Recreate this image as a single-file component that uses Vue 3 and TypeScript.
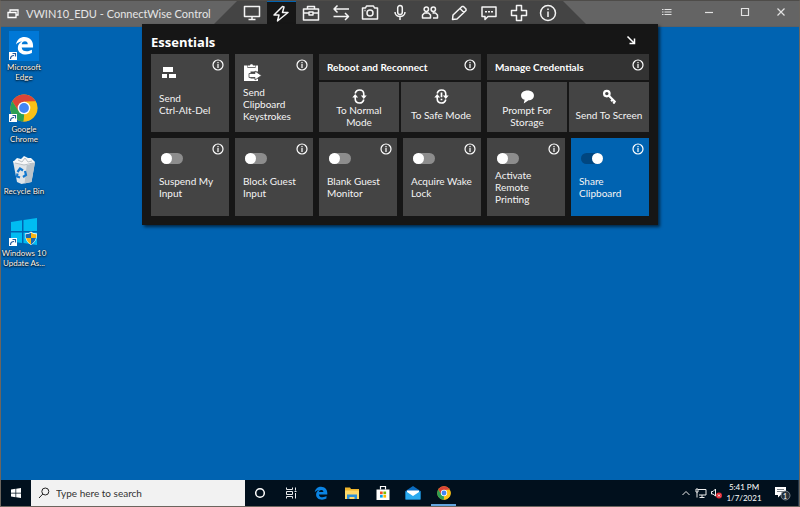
<script setup lang="ts">
import { ref } from 'vue'

interface Tool { name: string; path: string }
interface Tile { title: string; on: boolean }
interface Command { title: string; icon: string }
interface Group { title: string; commands: Command[] }

const tools: Tool[] = [
  { name: 'General', path: 'M1.5 2.5h15v10h-15zM9 12.500v2.500M5.500 15.500h7' },
  { name: 'Essentials', path: 'M10.500 1.500L2 10h5l-1.500 6L16 7.500h-5.500L12 2z' },
  { name: 'Toolbox', path: 'M1.500 5h15v11h-15zM5.500 5V2.500h7V5M1.500 9h5.500M11 9h5.500M7 8h4v3H7z' },
  { name: 'Transfer', path: 'M17 5H2M5.500 1.500L2 5l3.500 3.500M1.500 12.500h15M13 9l3.500 3.500L13 16' },
  { name: 'Screenshot', path: 'M1.500 4h3l1-2h7l1 2h3v11h-15zM12 9a3 3 0 1 1-6 0a3 3 0 0 1 6 0zM3.500 6.500h1' },
  { name: 'Audio', path: 'M9 1.500a2.300 2.300 0 0 1 2.300 2.300v4.500a2.300 2.300 0 0 1-4.600 0V3.800A2.300 2.300 0 0 1 9 1.500zM4 8c0 6 10 6 10 0M9 12.500V16' },
  { name: 'Participants', path: 'M7.500 5.200a2.200 2.200 0 1 1-4.400 0a2.200 2.200 0 0 1 4.400 0zM14.500 5.200a2.200 2.200 0 1 1-4.400 0a2.200 2.200 0 0 1 4.400 0zM1.500 14v-3l2-2h4l2 2v3zM12 14h4.500v-3l-2-2h-3' },
  { name: 'Annotate', path: 'M2.500 15.500l.5-4.500L12 2.500l1.500 0 2.500 2.500v1.500L7 15zM10 4.500l4 4' },
  { name: 'Messages', path: 'M2 3h14v9.500H8L5 15.500v-3H2zM5 7.700h2M8 7.700h2M11 7.700h2' },
  { name: 'Helper', path: 'M6.500 1.500h5v5h5v5h-5v5h-5v-5h-5v-5h5z' },
  { name: 'Information', path: 'M16.500 9a7.500 7.500 0 1 1-15 0a7.500 7.500 0 0 1 15 0zM9 7.500V13M9 4.500v1.500' },
]

const active = ref('Essentials')
const search = ref('')

const sends: Command[] = [
  { title: 'Send\nCtrl-Alt-Del', icon: 'keys' },
  { title: 'Send\nClipboard\nKeystrokes', icon: 'clipboard' },
]

const groups: Group[] = [
  { title: 'Reboot and Reconnect', commands: [{ title: 'To Normal\nMode', icon: 'cycle' }, { title: 'To Safe Mode', icon: 'safe' }] },
  { title: 'Manage Credentials', commands: [{ title: 'Prompt For\nStorage', icon: 'bubble' }, { title: 'Send To Screen', icon: 'key' }] },
]

const toggles = ref<Tile[]>([
  { title: 'Suspend My\nInput', on: false },
  { title: 'Block Guest\nInput', on: false },
  { title: 'Blank Guest\nMonitor', on: false },
  { title: 'Acquire Wake\nLock', on: false },
  { title: 'Activate\nRemote\nPrinting', on: false },
  { title: 'Share\nClipboard', on: true },
])
</script>

<template>
  <div class="window">
    <svg class="defs" aria-hidden="true">
      <symbol id="info" viewBox="0 0 12 12"><circle cx="6" cy="6" r="5" fill="none" stroke="currentColor" stroke-width="1.200" /><path d="M6 5v4M6 3v1.200" stroke="currentColor" stroke-width="1.200" /></symbol>
      <symbol id="chrome" viewBox="0 0 28 28">
        <circle cx="14" cy="14" r="13.500" fill="#fbc116" />
        <path d="M2.300 7.200A13.500 13.500 0 0 1 25.700 7.200L14 7.800l-5.500 9.200z" fill="#db4437" />
        <path d="M2.300 7.200l6.300 10 5.600 3L13.500 27.500A13.500 13.500 0 0 1 2.300 7.200z" fill="#2b9f54" />
        <path d="M14 7.800h11.700A13.500 13.500 0 0 1 13.200 27.500L20 17z" fill="#fbc116" />
        <circle cx="14" cy="14" r="6.300" fill="#fff" /><circle cx="14" cy="14" r="4.900" fill="#4285f4" />
      </symbol>
      <symbol id="edge" viewBox="0 0 20 20"><path d="M1 9C2 3.500 5.700 1 10 1c5.500 0 9 4 9 9v2H7c.2 3 2.500 4 5.200 4 2.200 0 4-.7 5.600-1.600V18c-1.800 1-4 1.500-6.300 1.500C6.500 19.500 3 16.800 3 12.500c0-3.400 1.800-5.500 4.500-6.700C4.800 6 2.500 7.200 1 9zm6.100-.4h6.300C13.400 6.700 12.400 5.600 10.500 5.600S7.300 6.800 7.100 8.600z" fill="currentColor" /></symbol>
      <symbol id="shortcut" viewBox="0 0 8 8"><path d="M0 0h8v8H0z" fill="#fff" /><path d="M1.500 7C1.500 4.500 3 3.500 5 3.500M3.500 1.500h3v3" fill="none" stroke="#245a9c" stroke-width="1.200" /></symbol>
    </svg>

    <header class="titlebar">
      <div class="caption">
        <svg class="app-icon" viewBox="0 0 12 10"><path d="M3 3V1h8v5H9M1 3.500h8v5H1z" fill="none" stroke="#fff" stroke-width="1.300" /></svg>
        <h1>VWIN10_EDU - ConnectWise Control</h1>
      </div>
      <nav class="toolbar" aria-label="Session tools">
        <button v-for="t in tools" :key="t.name" type="button" :aria-label="t.name" :class="{ active: active === t.name }" @click="active = t.name">
          <svg viewBox="0 0 18 18"><path :d="t.path" /></svg>
        </button>
      </nav>
      <div class="controls">
        <button type="button" aria-label="Menu"><svg viewBox="0 0 12 12"><path d="M1 3.500h1.500M1 6h1.500M1 8.500h1.500M3.500 3.500h7M3.500 6h7M3.500 8.500h7" /></svg></button>
        <button type="button" aria-label="Minimize"><svg viewBox="0 0 12 12"><path d="M2 6.500h8" /></svg></button>
        <button type="button" aria-label="Maximize"><svg viewBox="0 0 12 12"><path d="M2.500 2.500h7v7h-7z" /></svg></button>
        <button type="button" aria-label="Close"><svg viewBox="0 0 12 12"><path d="M2.500 2.500l7 7M9.500 2.500l-7 7" /></svg></button>
      </div>
    </header>

    <main class="desktop">
      <div class="shortcuts">
        <a class="shortcut" href="#edge">
          <svg viewBox="0 0 30 30"><path d="M0 0h30v30H0z" fill="#0078d7" /><use href="#edge" x="6" y="5" width="19" height="19" color="#fff" /><use href="#shortcut" x="0" y="21" width="8" height="8" /></svg>
          <span>Microsoft<br>Edge</span>
        </a>
        <a class="shortcut" href="#chrome">
          <svg viewBox="0 0 30 30"><use href="#chrome" x="1" y="1" width="28" height="28" /><use href="#shortcut" x="0" y="21" width="8" height="8" /></svg>
          <span>Google<br>Chrome</span>
        </a>
        <a class="shortcut" href="#bin">
          <svg viewBox="0 0 30 30">
            <path d="M4 6l22 1-3.500 20-10 2L8 27z" fill="#dfe4e8" /><path d="M18 8l8-1-3.500 20-7 1.500z" fill="#bac3ca" />
            <path d="M4 7l4-4 4 1 3-3 4 2 3 0 4 4-7 3-11-1z" fill="#f6f7f8" /><path d="M9 5l4 2 3-4 3 4 4-1M6 8l9 2 9-2" fill="none" stroke="#b8c0c6" />
            <path d="M8.500 17l2.500-3.500 3 2M16 16l1 4-3 2M11 22.500l-3-1 .5-3" fill="none" stroke="#1277ce" stroke-width="2.200" />
          </svg>
          <span>Recycle Bin</span>
        </a>
        <a class="shortcut" href="#update">
          <svg viewBox="0 0 30 30">
            <path d="M2 5l11-1.700V14H2zM14.500 3L28 1v13H14.500zM2 15.500h11V26L2 24.500zM14.500 15.500H28V28l-13.500-2z" fill="#00bcf2" />
            <path d="M16 16.500c3 0 5-1 6-2 1 1 3 2 6 2 0 6-2 9-6 11.500-4-2.500-6-5.500-6-11.500z" fill="#fff" />
            <path d="M22 15.500V21h-5c-.4-1-.5-2.500-.5-3.700 2.500-.2 4.500-.8 5.500-1.800zM22 21h5c-.8 3-2.500 5-5 6.500z" fill="#1769b5" /><path d="M22 15.500c1.500 1.300 3 1.700 5.500 1.800 0 1.200-.1 2.700-.5 3.700h-5zM17 21h5v6.500C19.500 26 17.800 24 17 21z" fill="#f9b414" />
            <use href="#shortcut" x="0" y="21" width="8" height="8" />
          </svg>
          <span>Windows 10<br>Update As...</span>
        </a>
      </div>
    </main>

    <section class="panel" aria-labelledby="panel-title">
      <div class="panel-head">
        <h2 id="panel-title">Essentials</h2>
        <button type="button" aria-label="Detach panel"><svg viewBox="0 0 10 10"><path d="M1.500 1.500l7 7M8.500 3.500v5h-5" /></svg></button>
      </div>
      <div class="tiles">
        <div v-for="s in sends" :key="s.icon" class="tile">
          <button class="tile-face" type="button">
            <span class="tile-icon">
              <svg v-if="s.icon === 'keys'" viewBox="0 0 20 19"><path d="M4 3h10v5H4zM3 10h5v4H3zM10 10h7v4h-7z" fill="#fff" /></svg>
              <svg v-else viewBox="0 0 20 19"><path d="M1 1.500h3.500V4h8V1.500H15v6H7.500v7H15V17H1z" fill="#fff" /><path d="M5 3.300V1.500h2C7-.3 10-.3 10 1.500h2v1.800z" fill="#fff" /><path d="M6 9.500h6V7l6.500 4.500L12 16v-2.500H6z" fill="#fff" stroke="#444" stroke-width=".8" /></svg>
            </span>
            <span class="tile-text">{{ s.title }}</span>
          </button>
          <button class="info" type="button" aria-label="More information"><svg><use href="#info" /></svg></button>
        </div>

        <div v-for="g in groups" :key="g.title" class="group">
          <h3>{{ g.title }}</h3>
          <button class="info" type="button" aria-label="More information"><svg><use href="#info" /></svg></button>
          <button v-for="c in g.commands" :key="c.title" class="command" type="button">
            <svg v-if="c.icon === 'bubble'" viewBox="0 0 14 14"><path d="M7 1.500c3.600 0 6 2 6 4.500s-2 4.500-5 4.600L3.500 13.500l.8-3.400C2.200 9.300 1 8 1 6c0-2.500 2.400-4.500 6-4.500z" fill="#fff" /></svg>
            <svg v-else-if="c.icon === 'key'" viewBox="0 0 14 14"><circle cx="4.500" cy="4.300" r="2.600" fill="none" stroke="#fff" stroke-width="2" /><path d="M6.500 6.300l6 6M10 10l-1.500 1.500M12 12l-1.500 1.500" stroke="#fff" stroke-width="2" /></svg>
            <svg v-else viewBox="0 0 14 14"><path d="M3 4.200C3.500 2 5 .9 7 .9c2.500 0 4 1.600 4 4V7M11 9.800c-.5 2.200-2 3.300-4 3.300-2.500 0-4-1.600-4-4V7" fill="none" stroke="#fff" stroke-width="1.500" /><path d="M8.300 6h5.400L11 9.300zM.3 8h5.400L3 4.700z" fill="#fff" /><path v-if="c.icon === 'safe'" d="M7 3.300v4.500M7 9v1.600" stroke="#fff" stroke-width="1.600" /></svg>
            <span>{{ c.title }}</span>
          </button>
        </div>

        <div v-for="t in toggles" :key="t.title" class="tile" :class="{ on: t.on }">
          <label class="tile-face">
            <span class="tile-icon"><input v-model="t.on" type="checkbox" role="switch"></span>
            <span class="tile-text">{{ t.title }}</span>
          </label>
          <button class="info" type="button" aria-label="More information"><svg><use href="#info" /></svg></button>
        </div>
      </div>
    </section>

    <footer class="taskbar">
      <button class="start" type="button" aria-label="Start"><svg viewBox="0 0 10 10"><path d="M0 1.400L4.500.8v3.900H0zM5.200.7L10 0v4.700H5.200zM0 5.400h4.500v3.900L0 8.600zM5.200 5.400H10V10l-4.800-.7z" fill="#fff" /></svg></button>
      <label class="search">
        <svg viewBox="0 0 12 12"><circle cx="7.300" cy="4.500" r="3.500" /><path d="M4.800 7L1 11" /></svg>
        <input v-model="search" type="text" placeholder="Type here to search" aria-label="Type here to search">
      </label>
      <div class="apps">
        <button type="button" aria-label="Cortana"><svg viewBox="0 0 16 16"><circle cx="8" cy="8" r="4.300" fill="none" stroke="#fff" stroke-width="1.500" /></svg></button>
        <button type="button" aria-label="Task view"><svg viewBox="0 0 16 16"><path d="M3.500 2.500v2h6v-2M3.500 13.500v-2h6v2M3.500 6.500h6v3h-6zM12.500 2.500v3M12.500 8v5.500M11.500 6.500h2" fill="none" stroke="#e8eaec" /></svg></button>
        <button type="button" aria-label="Edge"><svg viewBox="0 0 16 16"><use href="#edge" x="1" y="1" width="14" height="14" color="#0a84e4" /></svg></button>
        <button type="button" aria-label="File Explorer"><svg viewBox="0 0 16 16"><path d="M1 2.500h5l1 1.500h8v10H1z" fill="#f0b62d" /><path d="M1 5.500h14V14H1z" fill="#ffd968" /><path d="M3 14v-4.500h10V14h-2.500v-2h-5v2z" fill="#2d8fd6" /></svg></button>
        <button type="button" aria-label="Store"><svg viewBox="0 0 16 16"><path d="M5.500 4.500V1.500h5v3" fill="none" stroke="#fff" stroke-width="1.200" /><path d="M1.500 4.500h13V15h-13z" fill="#fff" /><path d="M5 6.500h2.700v2.700H5z" fill="#f25022" /><path d="M8.400 6.500h2.700v2.700H8.400z" fill="#7fba00" /><path d="M5 9.900h2.700v2.700H5z" fill="#00a4ef" /><path d="M8.400 9.900h2.700v2.700H8.400z" fill="#ffb900" /></svg></button>
        <button type="button" aria-label="Mail"><svg viewBox="0 0 16 16"><path d="M.5 6L8 1l7.500 5v8.500H.5z" fill="#0b6cc0" /><path d="M2 5.500h12V9l-6 3-6-3z" fill="#fff" /><path d="M.5 6L8 11l7.500-5v8.500H.5z" fill="#29a9ee" /></svg></button>
        <button class="running" type="button" aria-label="Chrome"><svg viewBox="0 0 16 16"><use href="#chrome" x="1" y="1" width="14" height="14" /></svg></button>
      </div>
      <div class="tray">
        <button type="button" aria-label="Show hidden icons"><svg viewBox="0 0 12 12"><path d="M2.500 8L6 4.500 9.500 8" /></svg></button>
        <button type="button" aria-label="Network"><svg viewBox="0 0 12 12"><path d="M3 2.500h8v5.500H4M7 8v2.500M4.500 10.500h5M1 2h2v3H1zM2 5v5.500" /></svg></button>
        <button type="button" aria-label="Volume muted"><svg viewBox="0 0 12 12"><path d="M1.500 4.500H3l2.500-2.500v7L3 7H1.500z" /><circle cx="9" cy="8.500" r="3" class="mute" /><path d="M8 7.500l2 2M10 7.500l-2 2" /></svg></button>
      </div>
      <time datetime="2021-01-07T17:41">5:41 PM<br>1/7/2021</time>
      <button class="notice" type="button" aria-label="1 notification"><svg viewBox="0 0 18 18"><path d="M2 3h11v8H7.500L5 13.500V11H2z" fill="#fff" /><path d="M4 5.500h7M4 7.500h7" stroke="#7c8389" /><circle cx="12.500" cy="11.500" r="4.500" fill="#25303a" stroke="#89939b" stroke-width=".8" /></svg><span>1</span></button>
    </footer>
  </div>
</template>

<style>
body { margin: 0; }
</style>

<style scoped>
* { box-sizing: border-box; }
.window {
  position: relative;
  display: flex;
  flex-direction: column;
  height: 100vh;
  border: 1px solid #6b655e;
  border-top-color: #4e4c49;
  background: #0063b1;
  color: #fff;
  font-family: Lato, "Open Sans", sans-serif;
  font-size: 10px;
  line-height: 12px;
}
.defs { display: none; }
svg { display: block; }
button { margin: 0; padding: 0; border: 0; background: none; color: inherit; font: inherit; cursor: pointer; }
h1, h2, h3 { margin: 0; font-size: inherit; }

.titlebar {
  display: grid;
  grid-template-columns: 1fr auto 1fr;
  height: 26px;
  border-bottom: 1px solid #5b6065;
  background: #646464;
}
.caption { display: flex; align-items: center; gap: 7px; padding-left: 6px; }
.caption h1 { color: #e6e6e6; font-size: 11px; font-weight: 400; white-space: nowrap; }
.app-icon { width: 12px; height: 10px; flex: none; }
.toolbar {
  display: flex;
  width: 374px;
  height: 24px;
  padding: 0 24px;
  background: #444;
  clip-path: polygon(24px 0, 350px 0, 100% 100%, 0 100%);
}
.toolbar button { flex: 1; display: grid; place-items: center; }
.toolbar button.active { border-top: 1px solid #0063b1; background: #161616; }
.toolbar svg { width: 18px; height: 18px; fill: none; stroke: #f4f4f4; stroke-width: 1.5; stroke-linejoin: round; }
.controls { display: flex; justify-content: flex-end; }
.controls button { width: 36px; height: 22px; display: grid; place-items: center; }
.controls button:first-child { margin-right: 6px; }
.controls svg { width: 12px; height: 12px; fill: none; stroke: #e2e2e2; stroke-width: 1.2; }

.desktop { flex: 1; padding: 4px 0; }
.shortcuts { display: grid; grid-auto-rows: 62px; width: 46px; }
.shortcut {
  display: flex;
  flex-direction: column;
  align-items: center;
  gap: 1px;
  color: #fff;
  font-size: 8px;
  line-height: 10px;
  text-align: center;
  text-decoration: none;
  text-shadow: 0 1px 2px #000, 0 0 1px #000;
  white-space: nowrap;
}
.shortcut svg { width: 30px; height: 30px; }

.panel {
  position: absolute;
  inset: 23px 0 auto;
  width: 516px;
  margin: 0 auto;
  padding: 0 9px 9px;
  background: #161616;
  box-shadow: 2px 2px 3px rgba(0, 0, 0, .6);
}
.panel-head { display: flex; align-items: center; justify-content: space-between; height: 30px; padding: 5px 13px 0 0; }
.panel-head h2 { font-family: "Open Sans", sans-serif; font-size: 13px; line-height: 18px; }
.panel-head button { padding-bottom: 4px; }
.panel-head svg { width: 10px; height: 10px; fill: none; stroke: #fff; stroke-width: 1.5; }
.tiles { display: grid; grid-template-columns: repeat(6, minmax(0, 1fr)); grid-auto-rows: 78px; gap: 6px; }
.tile { position: relative; background: #444; }
.tile.on { background: #0063b1; }
.tile-face { display: block; width: 100%; height: 100%; padding: 9px 8px; text-align: left; cursor: pointer; }
.tile-icon { display: flex; align-items: flex-start; height: 22px; }
.tile-icon svg { width: 20px; height: 19px; }
.tile-text { display: flex; align-items: center; height: 36px; color: #f4f4f4; white-space: pre; }
.info { position: absolute; top: 5px; right: 5px; }
.info svg { width: 12px; height: 12px; }
input[role="switch"] {
  appearance: none;
  width: 22px;
  height: 11px;
  margin: 6px 2px 0;
  border-radius: 6px;
  background: #8d8d8d;
}
input[role="switch"]::before { content: ""; display: block; width: 11px; height: 11px; border-radius: 50%; background: #fff; }
input[role="switch"]:checked { background: #004680; }
input[role="switch"]:checked::before { margin-left: auto; }

.group { position: relative; grid-column: span 2; display: grid; grid-template: 26px 50px / repeat(2, minmax(0, 1fr)); gap: 2px; }
.group h3 { grid-column: span 2; padding: 0 8px; background: #333; font-size: 10px; line-height: 26px; }
.command { display: flex; flex-direction: column; align-items: center; padding-top: 7px; background: #444; white-space: pre; }
.command svg { width: 15px; height: 15px; flex: none; }
.command span { display: grid; place-items: center; height: 22px; color: #f4f4f4; }

.taskbar { display: flex; height: 26px; background: #01101d; }
.start { width: 30px; display: grid; place-items: center; }
.start svg { width: 10px; height: 10px; }
.search { display: flex; flex: 0 1 214px; align-items: center; gap: 6px; padding: 0 7px; background: #f2f2f2; }
.search svg { width: 12px; height: 12px; flex: none; fill: none; stroke: #222; }
.search input { flex: 1; min-width: 0; padding: 0; border: 0; outline: 0; background: none; color: #333; font: inherit; }
.search input::placeholder { color: #333; opacity: 1; }
.apps { display: flex; flex: 0 1 214px; }
.apps button { flex: 1; display: grid; place-items: center; }
.apps svg { width: 16px; height: 16px; }
.apps .running { background: linear-gradient(#63a6df, #63a6df) center bottom / 25px 2px no-repeat; }
.tray { display: flex; margin-left: auto; }
.tray button { width: 15px; display: grid; place-items: center; }
.tray svg { width: 12px; height: 12px; fill: none; stroke: #eee; }
.tray .mute { fill: #e22b36; stroke: none; }
.taskbar time { width: 42px; padding-top: 2px; font-size: 8px; line-height: 11px; text-align: center; white-space: nowrap; }
.notice { position: relative; width: 34px; display: grid; place-items: center; border-right: 1px solid #25384a; }
.notice svg { width: 18px; height: 18px; }
.notice span { position: absolute; top: 11px; left: 18px; font-size: 7px; line-height: 10px; }
</style>
